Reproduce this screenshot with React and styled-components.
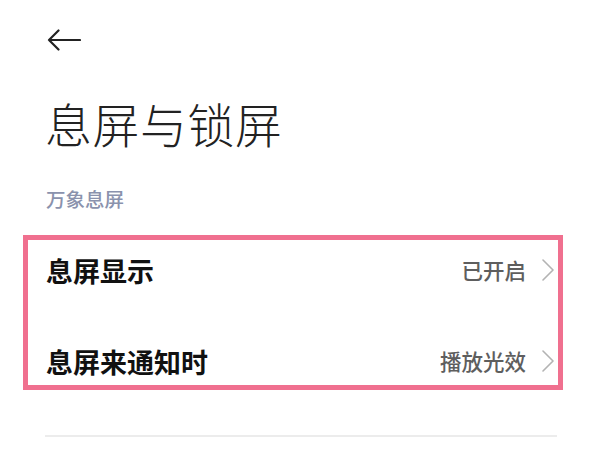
import React from "react";
import styled, { createGlobalStyle } from "styled-components";

const Global = createGlobalStyle`
  html, body { margin: 0; padding: 0; background: #ffffff; }
  body { font-family: "Noto Sans CJK SC", "Noto Sans", sans-serif; }
`;

const Page = styled.div`
  width: 600px;
  height: 450px;
  background: #ffffff;
  display: flex;
  flex-direction: column;
  overflow: hidden;
`;

const Header = styled.div`
  display: flex;
  align-items: center;
  height: 22px;
  margin-top: 29px;
  padding-left: 47px;
`;

const Title = styled.h1`
  margin: 48px 0 0 45px;
  font-size: 47px;
  line-height: 47px;
  font-weight: 300;
  color: #222222;
  letter-spacing: 0.5px;
`;

const SectionLabel = styled.div`
  margin: 43px 0 0 46px;
  font-size: 19.5px;
  line-height: 20px;
  font-weight: 500;
  color: #8a92ad;
`;

const Highlight = styled.div`
  margin: 26px 0 0 23px;
  width: 540px;
  height: 155px;
  box-sizing: border-box;
  border: 5px solid #f0708f;
  padding: 6px 4px 0 18px;
  display: flex;
  flex-direction: column;
  gap: 43px;
`;

const Row = styled.div`
  display: flex;
  align-items: center;
  justify-content: space-between;
  height: 48px;
`;

const RowLabel = styled.span`
  font-size: 27px;
  line-height: 27px;
  font-weight: 700;
  color: #111111;
`;

const RowValue = styled.span`
  display: flex;
  align-items: center;
  gap: 16px;
  font-size: 21.5px;
  line-height: 22px;
  font-weight: 500;
  color: #5e5e5e;
`;

const Divider = styled.div`
  margin: 45px 0 0 45px;
  width: 512px;
  height: 2px;
  background: #ececec;
`;

const BackArrow = () => (
  <svg width="34" height="22" viewBox="0 0 34 22" fill="none">
    <path d="M33 11H2M11.5 1.5L2 11l9.5 9.5" stroke="#222" strokeWidth="2.2" strokeLinecap="round" strokeLinejoin="round" />
  </svg>
);

const Chevron = () => (
  <svg width="12" height="22" viewBox="0 0 12 22" fill="none">
    <path d="M1 1l10 10L1 21" stroke="#b3b3b3" strokeWidth="1.6" strokeLinecap="round" strokeLinejoin="round" />
  </svg>
);

const items = [
  { label: "息屏显示", value: "已开启" },
  { label: "息屏来通知时", value: "播放光效" },
];

export default function App() {
  return (
    <>
      <Global />
      <Page>
        <Header>
          <BackArrow />
        </Header>
        <Title>息屏与锁屏</Title>
        <SectionLabel>万象息屏</SectionLabel>
        <Highlight>
          {items.map((it) => (
            <Row key={it.label}>
              <RowLabel>{it.label}</RowLabel>
              <RowValue>
                {it.value}
                <Chevron />
              </RowValue>
            </Row>
          ))}
        </Highlight>
        <Divider />
      </Page>
    </>
  );
}
